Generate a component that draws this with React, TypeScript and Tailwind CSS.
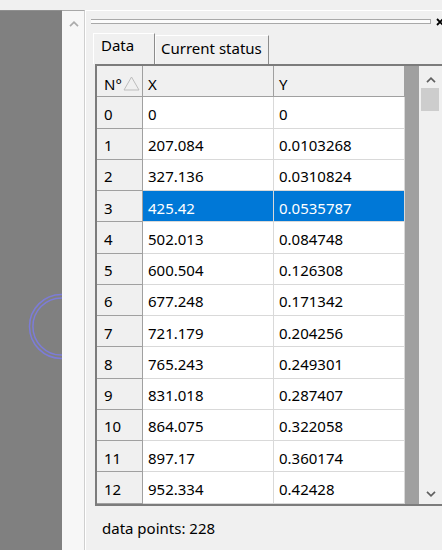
import React from "react";

const rows: [string, string][] = [
  ["0", "0"],
  ["207.084", "0.0103268"],
  ["327.136", "0.0310824"],
  ["425.42", "0.0535787"],
  ["502.013", "0.084748"],
  ["600.504", "0.126308"],
  ["677.248", "0.171342"],
  ["721.179", "0.204256"],
  ["765.243", "0.249301"],
  ["831.018", "0.287407"],
  ["864.075", "0.322058"],
  ["897.17", "0.360174"],
  ["952.334", "0.42428"],
];

function Chevron({ up, color }: { up: boolean; color: string }) {
  return (
    <svg width="10" height="6" viewBox="0 0 10 6">
      <path
        d={up ? "M1 5.2 L5 1.2 L9 5.2" : "M1 0.8 L5 4.8 L9 0.8"}
        stroke={color}
        strokeWidth="1.7"
        fill="none"
      />
    </svg>
  );
}

export default function App() {
  return (
    <div className="w-[442px] h-[550px] overflow-hidden bg-[#f0f0f0] flex flex-col text-[15px] leading-[20px] text-black font-['Noto_Sans',sans-serif]">
      <div className="h-[10px] shrink-0" />
      <div className="flex flex-1 min-h-0">
        {/* canvas */}
        <div className="relative w-[62px] shrink-0 overflow-hidden border-t border-[#8f8f8f] bg-[#808080]">
          <svg className="absolute left-0 top-0" width="62" height="540" viewBox="0 0 62 540">
            <circle cx="61.5" cy="315.5" r="32" fill="none" stroke="#7c7cd8" strokeWidth="1.5" />
            <circle cx="61.5" cy="315.5" r="28.6" fill="none" stroke="#7c7cd8" strokeWidth="1.5" />
          </svg>
        </div>
        {/* left scroll strip */}
        <div className="w-[23px] shrink-0 border-t border-r border-t-[#a8a8a8] border-r-[#cfcfcf] bg-[#f7f7f7] flex justify-center pt-[10px] pl-[2px]">
          <Chevron up color="#ababab" />
        </div>
        {/* docked panel */}
        <div className="flex-1 min-w-0 flex flex-col border-l border-t border-white">
          {/* gripper */}
          <div className="mt-[8px] ml-[5px] flex items-center h-[5px] shrink-0">
            <div className="w-[340px] h-[5px] shrink-0 border-y border-r border-[#a9a9a9] bg-[#fcfcfc]" />
            <svg className="ml-[5px] shrink-0 overflow-visible" width="8" height="8" viewBox="0 0 8 8">
              <path d="M1 1 L7 7 M7 1 L1 7" stroke="#000" strokeWidth="1.8" />
            </svg>
          </div>
          {/* tabs */}
          <div className="mt-[9px] h-[31px] shrink-0 flex items-end pl-[7px]">
            <div className="w-[62px] h-[31px] border-l border-t border-r border-l-white border-t-white border-r-[#8c8c8c] pl-[7px] pt-[1px] whitespace-nowrap">
              Data
            </div>
            <div className="w-[114px] h-[29px] border-l border-t border-r border-l-[#fbfbfb] border-t-white border-r-[#8c8c8c] pl-[5px] pt-[2px] whitespace-nowrap">
              Current status
            </div>
          </div>
          {/* grid */}
          <div className="ml-[9px] w-[349px] shrink-0 border-2 border-[#7c7c7c] flex">
            <div className="w-[308px] shrink-0 flex flex-col">
              <div className="flex h-[31.25px]">
                <div className="w-[46px] bg-[#f0f0f0] border-r border-b border-[#a0a0a0] pl-[7px] pt-[5px] flex items-center whitespace-nowrap">
                  <span>N°</span>
                  <svg className="ml-[1px]" width="17" height="15" viewBox="0 0 17 15">
                    <path d="M8.5 1 L16 14 L1 14 Z" fill="none" stroke="#bdbdbd" strokeWidth="1" />
                  </svg>
                </div>
                <div className="w-[131px] bg-[#f0f0f0] border-r border-b border-[#a0a0a0] pl-[5px] pt-[5px] flex items-center">
                  X
                </div>
                <div className="w-[131px] bg-[#f0f0f0] border-r border-b border-[#a0a0a0] pl-[5px] pt-[5px] flex items-center">
                  Y
                </div>
              </div>
              {rows.map(([x, y], i) => {
                const sel = i === 3;
                return (
                  <div key={i} className="flex h-[31.25px]">
                    <div className="w-[46px] bg-[#f0f0f0] border-r border-b border-[#a0a0a0] pl-[7px] pt-[3px] flex items-center">
                      {i}
                    </div>
                    <div
                      className={
                        sel
                          ? "w-[131px] bg-[#0078d7] text-white border-r border-b border-[#d9d9d9] pl-[5px] pt-[3px] flex items-center"
                          : "w-[131px] bg-white border-r border-b border-[#d9d9d9] pl-[5px] pt-[3px] flex items-center"
                      }
                    >
                      {x}
                    </div>
                    <div
                      className={
                        sel
                          ? "w-[131px] bg-[#0078d7] text-white border-r border-b border-[#d9d9d9] pl-[5px] pt-[3px] flex items-center"
                          : "w-[131px] bg-white border-r border-b border-[#d9d9d9] pl-[5px] pt-[3px] flex items-center"
                      }
                    >
                      {y}
                    </div>
                  </div>
                );
              })}
            </div>
            <div className="w-[14px] shrink-0 bg-[#a0a0a0]" />
            <div className="w-[23px] shrink-0 bg-[#f0f0f0] flex flex-col">
              <div className="h-[22px] flex justify-center pt-[11px]">
                <Chevron up color="#606060" />
              </div>
              <div className="ml-[2px] w-[18px] h-[23px] bg-[#cdcdcd]" />
              <div className="flex-1" />
              <div className="h-[22px] flex justify-center pt-[9px]">
                <Chevron up={false} color="#606060" />
              </div>
            </div>
          </div>
          {/* footer */}
          <div className="mt-[12px] pl-[16px] whitespace-nowrap">data points: 228</div>
        </div>
      </div>
    </div>
  );
}
